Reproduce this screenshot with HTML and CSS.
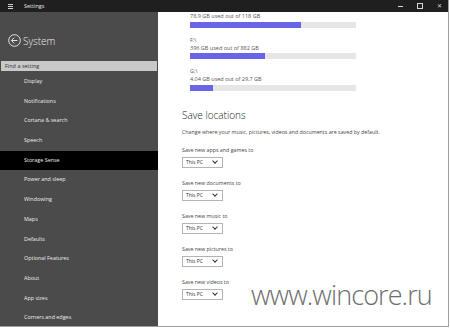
FILE: index.html
```html
<!DOCTYPE html>
<html>
<head>
    <title>Settings</title>
    <link rel="stylesheet" href="styles.css">
</head>
<body>
    <div class="window">
        <div class="titlebar">
            <span class="hamburger"></span>
            <span class="app-title">Settings</span>
            <div class="controls">
                <span class="ctl-min"></span>
                <span class="ctl-max"></span>
                <span class="ctl-close">&#x2715;</span>
            </div>
        </div>

        <div class="main">
            <div class="sidebar">
                <div class="sidebar-header">
                    <svg class="back" width="13" height="13" viewBox="0 0 13 13">
                        <circle cx="6.5" cy="6.5" r="5.8" fill="none" stroke="#e6e6e6" stroke-width="1"/>
                        <path d="M3.6 6.5h5.8M6.2 3.6L3.4 6.5l2.8 2.9" fill="none" stroke="#e6e6e6" stroke-width="1"/>
                    </svg>
                    <span class="section-title">System</span>
                </div>
                <div class="search">Find a setting</div>
                <ul class="nav">
                    <li>Display</li>
                    <li>Notifications</li>
                    <li>Cortana &amp; search</li>
                    <li>Speech</li>
                    <li class="active">Storage Sense</li>
                    <li>Power and sleep</li>
                    <li>Windowing</li>
                    <li>Maps</li>
                    <li>Defaults</li>
                    <li>Optional Features</li>
                    <li>About</li>
                    <li>App sizes</li>
                    <li>Corners and edges</li>
                </ul>
            </div>

            <div class="content">
                <div class="drives">
                    <div class="drive">
                        <div class="drive-usage">78,9 GB used out of 118 GB</div>
                        <div class="bar"><div class="fill" style="width: 66.9%"></div></div>
                    </div>
                    <div class="drive">
                        <div class="drive-name">F:\</div>
                        <div class="drive-usage">396 GB used out of 882 GB</div>
                        <div class="bar"><div class="fill" style="width: 44.9%"></div></div>
                    </div>
                    <div class="drive">
                        <div class="drive-name">G:\</div>
                        <div class="drive-usage">4,04 GB used out of 29,7 GB</div>
                        <div class="bar"><div class="fill" style="width: 13.6%"></div></div>
                    </div>
                </div>

                <h2>Save locations</h2>
                <p class="desc">Change where your music, pictures, videos and documents are saved by default.</p>

                <div class="location">
                    <div class="loc-label">Save new apps and games to</div>
                    <div class="dropdown">This PC <span class="chev"></span></div>
                </div>
                <div class="location">
                    <div class="loc-label">Save new documents to</div>
                    <div class="dropdown">This PC <span class="chev"></span></div>
                </div>
                <div class="location">
                    <div class="loc-label">Save new music to</div>
                    <div class="dropdown">This PC <span class="chev"></span></div>
                </div>
                <div class="location">
                    <div class="loc-label">Save new pictures to</div>
                    <div class="dropdown">This PC <span class="chev"></span></div>
                </div>
                <div class="location">
                    <div class="loc-label">Save new videos to</div>
                    <div class="dropdown">This PC <span class="chev"></span></div>
                </div>

                <div class="watermark">www.wincore.ru</div>
            </div>
        </div>
    </div>
</body>
</html>
```

FILE: styles.css
```css
:root {
    --titlebar: #1f1f1f;
    --sidebar: #4b4b4b;
    --search: #c9c9c9;
    --bar-fill: #6866e6;
    --bar-track: #e6e6e6;
    --text-dark: #333;
    --border: #a0a0a0;
}

body {
    margin: 0;
    background: #fff;
    font-family: 'Open Sans', 'Noto Sans', sans-serif;
    overflow: hidden;
}

.window {
    width: 448px;
    height: 326px;
    border-right: 1px solid var(--border);
    border-bottom: 1px solid var(--border);
    display: flex;
    flex-direction: column;
}

.titlebar {
    height: 12px;
    background: var(--titlebar);
    display: flex;
    align-items: center;
    color: #e8e8e8;
    flex-shrink: 0;
}

.hamburger {
    width: 5px;
    height: 3px;
    margin-left: 8px;
    border-top: 1px solid #cfcfcf;
    border-bottom: 1px solid #cfcfcf;
    position: relative;
}

.hamburger::after {
    content: '';
    position: absolute;
    left: 0;
    right: 0;
    top: 1px;
    height: 1px;
    background: #cfcfcf;
}

.app-title {
    margin-left: 11px;
    font-size: 5.5px;
}

.controls {
    margin-left: auto;
    display: flex;
    align-items: center;
    gap: 14px;
    margin-right: 6px;
}

.ctl-min {
    width: 5px;
    height: 1px;
    background: #d8d8d8;
}

.ctl-max {
    width: 4px;
    height: 4px;
    border: 1px solid #d8d8d8;
}

.ctl-close {
    font-size: 6px;
    line-height: 6px;
    color: #d8d8d8;
}

.main {
    flex: 1;
    display: flex;
    min-height: 0;
}

.sidebar {
    width: 158px;
    background: var(--sidebar);
    flex-shrink: 0;
    color: #fff;
}

.sidebar-header {
    height: 49px;
    display: flex;
    align-items: center;
    padding-left: 8px;
    padding-top: 8px;
    box-sizing: border-box;
}

.back {
    display: block;
}

.section-title {
    margin-left: 2px;
    font-size: 10px;
    font-weight: 300;
    color: #ececec;
}

.search {
    height: 10px;
    margin: 0 1px;
    background: var(--search);
    color: var(--text-dark);
    font-size: 5.5px;
    line-height: 10px;
    padding-left: 4px;
}

.nav {
    list-style: none;
    margin: 1px 0 0;
    padding: 0;
}

.nav li {
    height: 19.7px;
    line-height: 19.7px;
    padding-left: 24px;
    font-size: 5.4px;
    color: #ececec;
}

.nav li.active {
    background: #000;
}

.content {
    flex: 1;
    position: relative;
    overflow: hidden;
    padding-left: 24px;
    color: var(--text-dark);
}

.drives {
    padding-left: 8px;
}

.drive {
    margin-bottom: 9px;
}

.drive-name,
.drive-usage {
    font-size: 5.5px;
    line-height: 8px;
    color: #555;
}

.drive-name {
    line-height: 7px;
}

.bar {
    width: 166px;
    height: 6px;
    margin-top: 1.5px;
    background: var(--bar-track);
}

.fill {
    height: 100%;
    background: var(--bar-fill);
}

h2 {
    margin: 17px 0 0;
    font-size: 10px;
    line-height: 14px;
    font-weight: 300;
    color: #222;
}

.desc {
    margin: 6px 0 10px;
    font-size: 5.3px;
    line-height: 8px;
    color: #444;
}

.location {
    margin-bottom: 11px;
}

.loc-label {
    font-size: 5.3px;
    line-height: 8px;
    color: #444;
}

.dropdown {
    width: 36px;
    height: 9px;
    margin-top: 3px;
    border: 1px solid #b4b4b4;
    display: flex;
    align-items: center;
    padding-left: 3px;
    font-size: 5px;
    color: #333;
}

.chev {
    width: 3px;
    height: 3px;
    margin-left: auto;
    margin-right: 5px;
    margin-top: -2px;
    border-right: 1px solid #333;
    border-bottom: 1px solid #333;
    transform: rotate(45deg);
}

.watermark {
    position: absolute;
    left: 93px;
    top: 264px;
    font-size: 27px;
    font-weight: 300;
    color: #6e6e6e;
    letter-spacing: -0.9px;
}
```
